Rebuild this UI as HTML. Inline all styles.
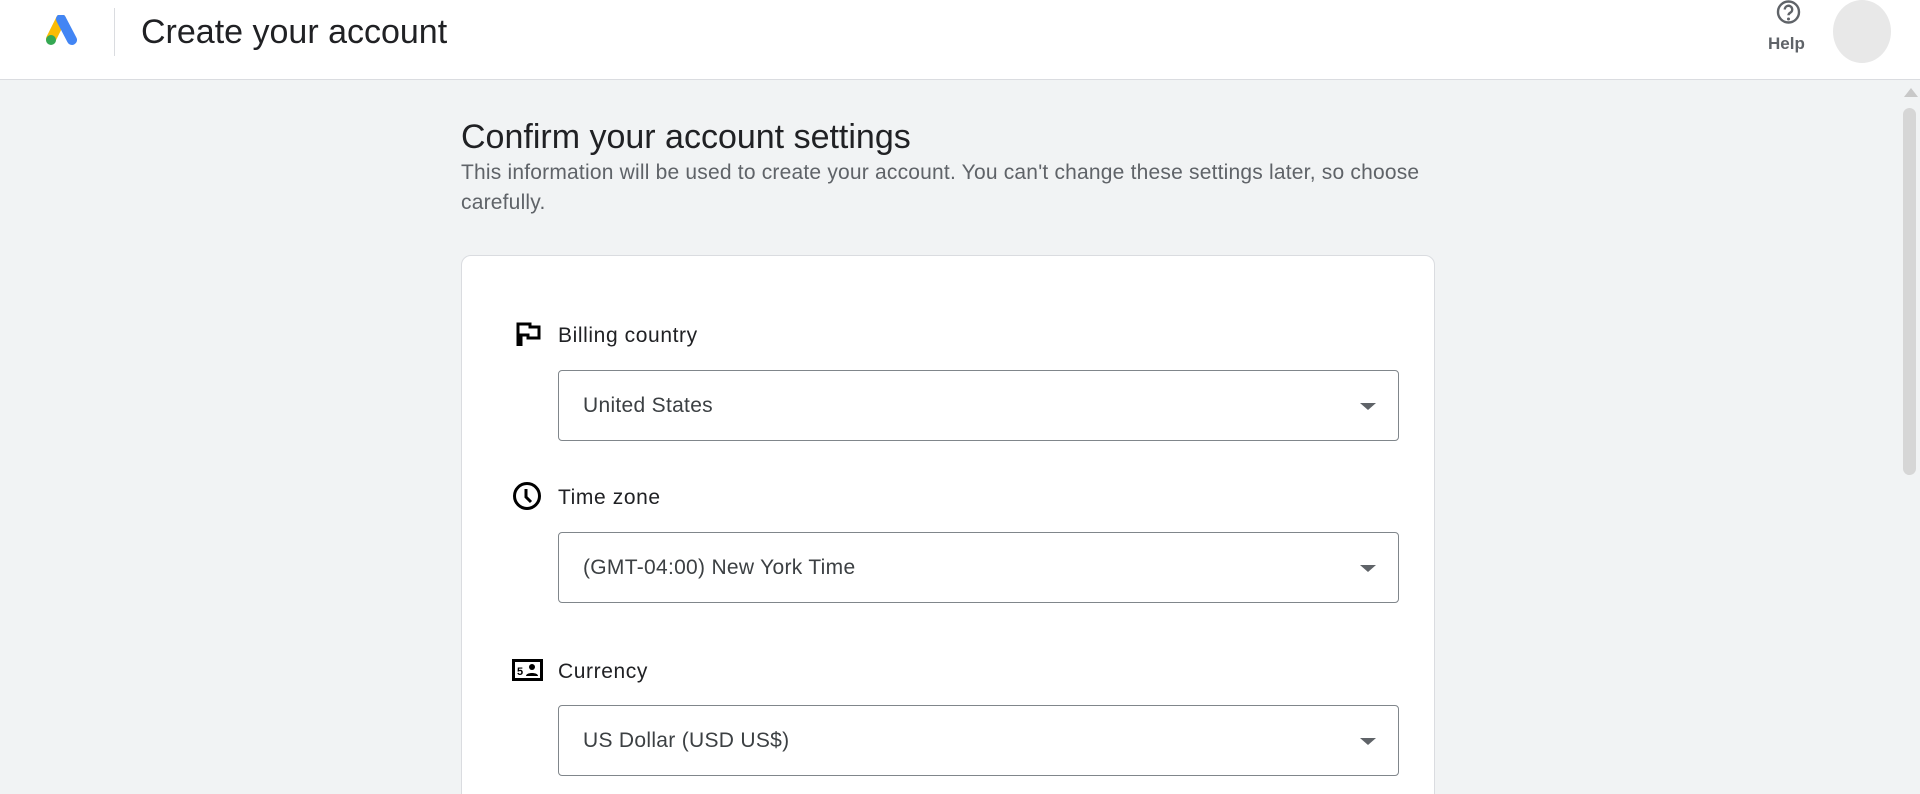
<!DOCTYPE html>
<html><head><style>
*{margin:0;padding:0;box-sizing:border-box}
html,body{width:1920px;height:794px;overflow:hidden}
body{background:#f1f3f4;font-family:"Liberation Sans",sans-serif;position:relative}
.hdr{position:absolute;left:0;top:0;width:1920px;height:80px;background:#fff;border-bottom:1px solid #dadce0}
.abs{position:absolute}
.card{position:absolute;left:461px;top:255px;width:974px;height:560px;background:#fff;border:1px solid #dadce0;border-radius:10px}
.lbl{position:absolute;left:558px;font-size:21px;letter-spacing:0.6px;color:#202124;line-height:24px}
.sel{position:absolute;left:558px;width:841px;height:71px;border:1px solid #80868b;border-radius:4px;background:#fff}
.sel span{position:absolute;left:24px;top:0;line-height:69px;font-size:21px;letter-spacing:0.3px;color:#3c4043}
.sel i{position:absolute;right:22px;top:32px;width:0;height:0;border-left:8px solid transparent;border-right:8px solid transparent;border-top:7px solid #5f6368}
</style></head><body>
<div class="hdr">
<svg class="abs" style="left:44px;top:15px" width="36" height="32" viewBox="0 0 36 32">
<path d="M17 4 L7 24" stroke="#fbbc04" stroke-width="10" stroke-linecap="round"/>
<path d="M17 4 L28 25" stroke="#4285f4" stroke-width="10" stroke-linecap="round"/>
<circle cx="7" cy="25" r="5" fill="#34a853"/>
</svg>
<div class="abs" style="left:114px;top:8px;width:1px;height:48px;background:#dadce0"></div>
<div class="abs" style="left:141px;top:12px;font-size:34px;color:#202124;line-height:40px">Create your account</div>
<svg class="abs" style="left:1775px;top:0" width="28" height="26" viewBox="0 0 28 26">
<circle cx="13.5" cy="12" r="10.5" fill="none" stroke="#5f6368" stroke-width="2.4"/>
<path d="M9.8 9.5a3.7 3.7 0 1 1 5.5 3.2c-1.2.7-1.8 1.3-1.8 2.6" fill="none" stroke="#5f6368" stroke-width="2.4"/>
<circle cx="13.5" cy="19" r="1.5" fill="#5f6368"/>
</svg>
<div class="abs" style="left:1768px;top:34px;font-size:17px;font-weight:bold;color:#5f6368">Help</div>
<div class="abs" style="left:1833px;top:0;width:58px;height:63px;border-radius:50%;background:#e8e8e8"></div>
</div>
<div class="abs" style="left:1904px;top:88px;width:0;height:0;border-left:7px solid transparent;border-right:7px solid transparent;border-bottom:9px solid #c8c8c8"></div>
<div class="abs" style="left:1903px;top:108px;width:13px;height:367px;border-radius:7px;background:#d6d6d6"></div>
<div class="abs" style="left:461px;top:117px;font-size:34px;color:#202124;line-height:40px">Confirm your account settings</div>
<div class="abs" style="left:461px;top:158px;width:985px;font-size:21px;letter-spacing:0.2px;color:#5f6368;line-height:30px">This information will be used to create your account. You can't change these settings later, so choose carefully.</div>
<div class="card"></div>
<svg class="abs" style="left:516px;top:322px" width="26" height="26" viewBox="0 0 26 26"><path d="M2 24V2h12v3h9v11H12v-3H5v11" fill="none" stroke="#000" stroke-width="3"/></svg>
<div class="lbl" style="top:324px">Billing country</div>
<div class="sel" style="top:370px"><span>United States</span><i></i></div>
<svg class="abs" style="left:512px;top:481px" width="30" height="30" viewBox="0 0 30 30"><circle cx="15" cy="15" r="12.5" fill="none" stroke="#000" stroke-width="3"/><path d="M14 8v8l5 5" fill="none" stroke="#000" stroke-width="3"/></svg>
<div class="lbl" style="top:486px">Time zone</div>
<div class="sel" style="top:532px"><span>(GMT-04:00) New York Time</span><i></i></div>
<svg class="abs" style="left:512px;top:659px" width="31" height="22" viewBox="0 0 31 22"><rect x="1.5" y="1.5" width="28" height="19" fill="none" stroke="#000" stroke-width="3"/><text x="5" y="16" font-size="11" font-weight="bold" font-family="Liberation Sans">5</text><circle cx="20" cy="8" r="3" fill="#000"/><path d="M14 17c0-4 12-4 12 0z" fill="#000"/></svg>
<div class="lbl" style="top:660px">Currency</div>
<div class="sel" style="top:705px"><span>US Dollar (USD US$)</span><i></i></div>
</body></html>
